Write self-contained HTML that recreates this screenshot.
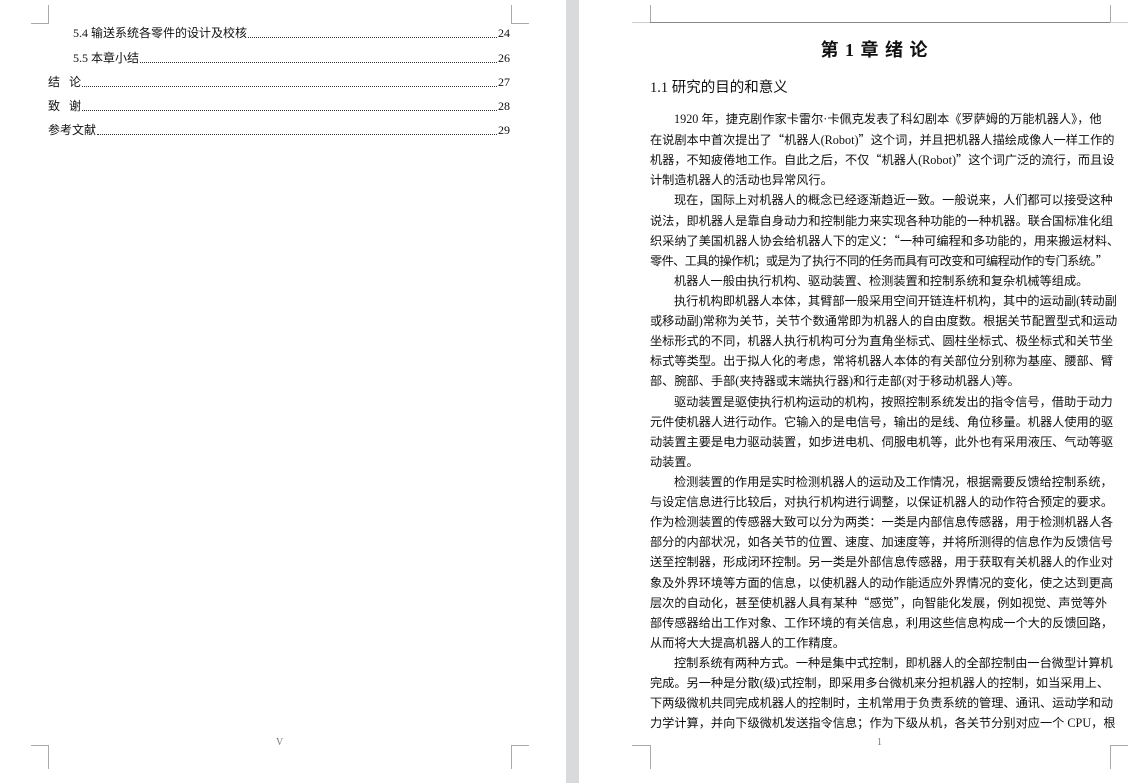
<!DOCTYPE html>
<html><head><meta charset="utf-8"><style>
*{margin:0;padding:0;box-sizing:border-box}
body{width:1135px;height:783px;background:#fff;position:relative;overflow:hidden;font-family:"Liberation Serif","Noto Sans CJK SC",sans-serif;color:#111}
.a{position:absolute}
.gray{left:566px;top:0;width:13px;height:783px;background:#d9dadc}
.v{position:absolute;width:1px;background:#aaa}
.h{position:absolute;height:1px;background:#aaa}
.toc{position:absolute;left:48px;width:462px;display:flex;align-items:flex-end;font-size:12px;height:16px;line-height:16px}
.toc .f{flex:1;border-bottom:1px dotted #333;margin:0 1px 3px}
.ln{position:absolute;left:650px;width:448px;font-size:12.2px;line-height:16px;height:16px;white-space:nowrap;text-align:justify;text-align-last:justify;overflow:visible}
.ln.i{padding-left:24px}
.ln.e{text-align-last:left}
q{quotes:none;font-family:"Noto Sans CJK SC",sans-serif;line-height:0;vertical-align:baseline}
</style></head><body>
<div class="a gray"></div>
<div class="v" style="left:48px;top:5px;height:19px"></div><div class="h" style="left:31px;top:23px;width:18px"></div>
<div class="v" style="left:511px;top:5px;height:19px"></div><div class="h" style="left:511px;top:23px;width:18px"></div>
<div class="v" style="left:48px;top:745px;height:24px"></div><div class="h" style="left:31px;top:745px;width:18px"></div>
<div class="v" style="left:511px;top:745px;height:24px"></div><div class="h" style="left:511px;top:745px;width:18px"></div>
<div class="a" style="left:276px;top:737px;font-size:10px;color:#777">V</div>

<div class="toc" style="top:25px;padding-left:25px"><span>5.4 输送系统各零件的设计及校核</span><span class="f"></span><span>24</span></div>
<div class="toc" style="top:50px;padding-left:25px"><span>5.5 本章小结</span><span class="f"></span><span>26</span></div>
<div class="toc" style="top:74px"><span>结&nbsp;&nbsp;&nbsp;论</span><span class="f"></span><span>27</span></div>
<div class="toc" style="top:98px"><span>致&nbsp;&nbsp;&nbsp;谢</span><span class="f"></span><span>28</span></div>
<div class="toc" style="top:122px"><span>参考文献</span><span class="f"></span><span>29</span></div>

<div class="v" style="left:650px;top:5px;height:18px"></div><div class="h" style="left:632px;top:22px;width:18px;background:#ccc"></div>
<div class="h" style="left:650px;top:22px;width:460px;background:#888"></div>
<div class="v" style="left:1110px;top:5px;height:18px"></div><div class="h" style="left:1110px;top:22px;width:18px;background:#ccc"></div>
<div class="v" style="left:650px;top:745px;height:24px"></div><div class="h" style="left:632px;top:745px;width:18px"></div>
<div class="v" style="left:1110px;top:745px;height:24px"></div><div class="h" style="left:1110px;top:745px;width:18px"></div>
<div class="a" style="left:877px;top:737px;font-size:10px;color:#777">1</div>

<div class="a" style="left:650px;width:448px;top:38px;text-align:center;font-size:18px;font-weight:bold;line-height:24px;font-family:'Liberation Serif','Noto Sans CJK SC',serif;word-spacing:2px">第 1 章 绪 论</div>
<div class="a" style="left:650px;top:78px;font-size:14.5px;line-height:20px">1.1 研究的目的和意义</div>

<div class="ln i" style="top:111px">1920 年，捷克剧作家卡雷尔·卡佩克发表了科幻剧本《罗萨姆的万能机器人》，他</div>
<div class="ln" style="top:132px">在说剧本中首次提出了<q>“</q>机器人(Robot)<q>”</q>这个词，并且把机器人描绘成像人一样工作的</div>
<div class="ln" style="top:152px">机器，不知疲倦地工作。自此之后，不仅<q>“</q>机器人(Robot)<q>”</q>这个词广泛的流行，而且设</div>
<div class="ln e" style="top:172px">计制造机器人的活动也异常风行。</div>
<div class="ln i" style="top:192px">现在，国际上对机器人的概念已经逐渐趋近一致。一般说来，人们都可以接受这种</div>
<div class="ln" style="top:213px">说法，即机器人是靠自身动力和控制能力来实现各种功能的一种机器。联合国标准化组</div>
<div class="ln" style="top:233px">织采纳了美国机器人协会给机器人下的定义：<q>“</q>一种可编程和多功能的，用来搬运材料、</div>
<div class="ln" style="top:253px;letter-spacing:-0.6px">零件、工具的操作机；或是为了执行不同的任务而具有可改变和可编程动作的专门系统。<q>”</q></div>
<div class="ln i e" style="top:273px">机器人一般由执行机构、驱动装置、检测装置和控制系统和复杂机械等组成。</div>
<div class="ln i" style="top:293px">执行机构即机器人本体，其臂部一般采用空间开链连杆机构，其中的运动副(转动副</div>
<div class="ln" style="top:313px">或移动副)常称为关节，关节个数通常即为机器人的自由度数。根据关节配置型式和运动</div>
<div class="ln" style="top:333px">坐标形式的不同，机器人执行机构可分为直角坐标式、圆柱坐标式、极坐标式和关节坐</div>
<div class="ln" style="top:353px">标式等类型。出于拟人化的考虑，常将机器人本体的有关部位分别称为基座、腰部、臂</div>
<div class="ln e" style="top:373px">部、腕部、手部(夹持器或末端执行器)和行走部(对于移动机器人)等。</div>
<div class="ln i" style="top:394px">驱动装置是驱使执行机构运动的机构，按照控制系统发出的指令信号，借助于动力</div>
<div class="ln" style="top:414px">元件使机器人进行动作。它输入的是电信号，输出的是线、角位移量。机器人使用的驱</div>
<div class="ln" style="top:434px">动装置主要是电力驱动装置，如步进电机、伺服电机等，此外也有采用液压、气动等驱</div>
<div class="ln e" style="top:454px">动装置。</div>
<div class="ln i" style="top:474px">检测装置的作用是实时检测机器人的运动及工作情况，根据需要反馈给控制系统，</div>
<div class="ln" style="top:494px">与设定信息进行比较后，对执行机构进行调整，以保证机器人的动作符合预定的要求。</div>
<div class="ln" style="top:514px">作为检测装置的传感器大致可以分为两类：一类是内部信息传感器，用于检测机器人各</div>
<div class="ln" style="top:534px">部分的内部状况，如各关节的位置、速度、加速度等，并将所测得的信息作为反馈信号</div>
<div class="ln" style="top:554px">送至控制器，形成闭环控制。另一类是外部信息传感器，用于获取有关机器人的作业对</div>
<div class="ln" style="top:575px">象及外界环境等方面的信息，以使机器人的动作能适应外界情况的变化，使之达到更高</div>
<div class="ln" style="top:595px">层次的自动化，甚至使机器人具有某种<q>“</q>感觉<q>”</q>，向智能化发展，例如视觉、声觉等外</div>
<div class="ln" style="top:615px">部传感器给出工作对象、工作环境的有关信息，利用这些信息构成一个大的反馈回路，</div>
<div class="ln e" style="top:635px">从而将大大提高机器人的工作精度。</div>
<div class="ln i" style="top:655px">控制系统有两种方式。一种是集中式控制，即机器人的全部控制由一台微型计算机</div>
<div class="ln" style="top:675px">完成。另一种是分散(级)式控制，即采用多台微机来分担机器人的控制，如当采用上、</div>
<div class="ln" style="top:695px">下两级微机共同完成机器人的控制时，主机常用于负责系统的管理、通讯、运动学和动</div>
<div class="ln" style="top:715px">力学计算，并向下级微机发送指令信息；作为下级从机，各关节分别对应一个 CPU，根</div>
</body></html>
